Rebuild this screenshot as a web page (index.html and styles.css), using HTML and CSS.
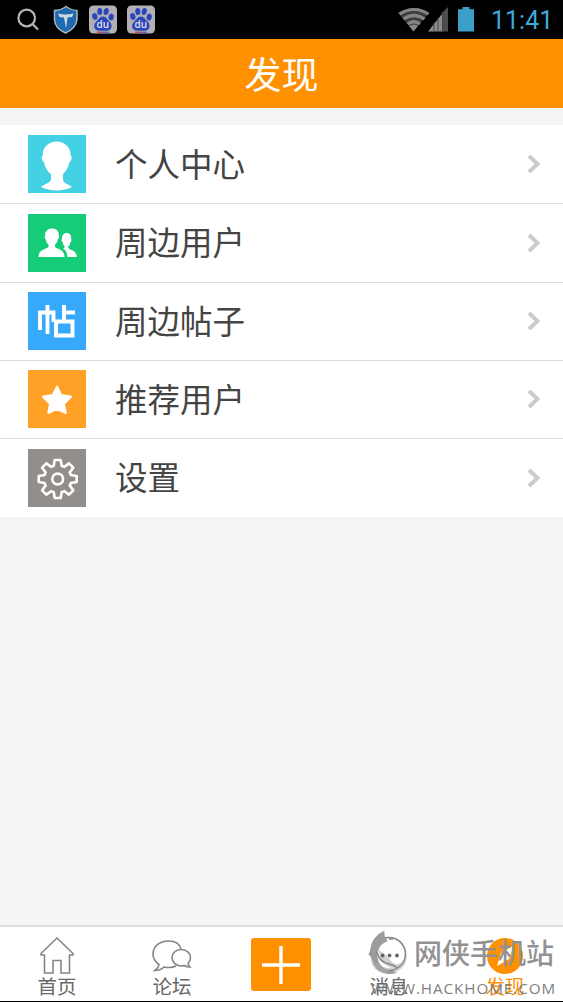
FILE: index.html
```
<!DOCTYPE html>
<html lang="zh-CN">
<head>
<meta charset="utf-8">
<title>发现</title>
<link rel="stylesheet" href="styles.css">
</head>
<body>
<div class="phone">
  <div class="status">
    <svg class="status-left" width="170" height="39" viewBox="0 0 170 39">
      <g fill="none" stroke="#b4b4b4" stroke-width="2.200"><circle cx="26.700" cy="18" r="8.300"/><path d="M32.500 24l5.500 5.500"/></g>
      <path d="M66 6.500q6 4 11 4v9q-1 9-11.500 13.500Q55 28.500 54.500 19.500v-9q6 0 11.500-4z" fill="#1f69ac" stroke="#a5b7c4" stroke-width="1.500"/>
      <path d="M58 13.500q7.500 2 15.500 0l-1.500 3.500-4.500.5-1.500 11-2-11-4.500-.5z" fill="#c9dbe5"/>
      <defs>
        <g id="paw">
          <rect width="28" height="28" rx="4.500" fill="#b0b0b6"/>
          <path d="M8 26h6v2H8z" fill="#b35568"/><path d="M14 26h6v2h-6z" fill="#6269b0"/>
          <g fill="#2b45bd"><ellipse cx="5.800" cy="11" rx="2.600" ry="3.400" transform="rotate(-15 5.800 11)"/><ellipse cx="10.800" cy="6" rx="2.500" ry="3.500"/><ellipse cx="17.200" cy="6" rx="2.500" ry="3.500" transform="rotate(12 17.200 6)"/><ellipse cx="22.200" cy="11.500" rx="2.600" ry="3.400" transform="rotate(10 22.200 11.500)"/><path d="M14 11c3 0 4 3 6.500 5s3.500 8-1.500 9c-3 .4-7 .4-10 0-5-1-4.500-6-2-8.500S11 11 14 11z"/></g>
          <text class="du" x="13.700" y="22.300" text-anchor="middle">du</text>
        </g>
      </defs>
      <use href="#paw" x="89" y="5.500"/><use href="#paw" x="127" y="5.500"/>
    </svg>
    <svg class="status-right" width="82" height="39" viewBox="396 0 82 39">
      <g fill="none" stroke="#929292" stroke-width="3.200"><path d="M399.500 14q14.500-9 29 0M403.500 19q10.500-7 21 0M407.500 24q6-4.500 12.500 0"/></g>
      <path d="M409 26q5-3 9 0l-4.500 5.500z" fill="#929292"/>
      <path d="M398 13q16-10 31 0l-15.500 18z" fill="#777" opacity=".5"/>
      <path d="M428 31.500L442 14v17.500z" fill="#8c8c8c"/><path d="M443 12l5-5v24.500h-5z" fill="#4d4d4d"/>
      <path d="M434 22v10M438 18v14M442.500 12v20" stroke="#444"/>
      <path d="M462.500 7h7v2.200h4.500v22.300h-16V9.200h4.500z" fill="#3c9fc8"/>
    </svg>
    <span class="clock">11:41</span>
  </div>
  <header class="title">发现</header>
  <main class="list">
    <div class="row">
      <svg class="tile" viewBox="0 0 58 58"><rect width="58" height="58" fill="#43d1e3"/><path d="M28.500 6.500C37 6.500 43 13 42.500 20c2 2 1 6-1 7-1.500 7-4.500 10-6.500 12v6c1 4 6 4 9 7-8 4.500-22 4.500-31 0 3-3 8-3.500 10-7v-6c-3-2-6-6-7-12-2.500-1-3-5-1-7-1-7 5-13.500 13.500-13.500z" fill="#fff"/></svg>
      <span class="label">个人中心</span><svg class="chevron" viewBox="0 0 14 22"><path d="M2 3l8.500 8L2 19"/></svg>
    </div>
    <div class="row">
      <svg class="tile" viewBox="0 0 58 58"><rect width="58" height="58" fill="#15cd78"/><path d="M24.200 14.500c4.500 0 7 3 6.500 7 1 2 0 3.500-1 4-.4 3-1.700 4-2.700 5v2c1 3 9.500 2 9.500 10.500h-26c0-8.500 9-7.500 10-10.500v-2c-1.500-1-2.300-3-2.700-5-1.200-1-1.500-3-.6-4-.5-4 2.500-7 7-7zM38.500 19c3.600 0 5 3 4.700 6 .8 1.500-.2 3-.8 3.200-.3 2-1 3-2 4v1.800c1 2.500 8.400 1.500 8.400 9h-9.500c0-4.500-1.300-6.500-4-8.500 1-.5 1.300-1 1.300-2.500-1.200-1-1.700-2-2-4-1-.5-1.400-2-.7-3 0-3.500 1.500-6 4.600-6z" fill="#fff"/></svg>
      <span class="label">周边用户</span><svg class="chevron" viewBox="0 0 14 22"><path d="M2 3l8.500 8L2 19"/></svg>
    </div>
    <div class="row">
      <svg class="tile" viewBox="0 0 58 58"><rect width="58" height="58" fill="#37a9fc"/><path d="M12 38V20.500h13.500V30M19.500 13V42M36 13V30M36 20.500h11M28 29.500H44.500V43.500H28z" fill="none" stroke="#fff" stroke-width="3.900"/></svg>
      <span class="label">周边帖子</span><svg class="chevron" viewBox="0 0 14 22"><path d="M2 3l8.500 8L2 19"/></svg>
    </div>
    <div class="row">
      <svg class="tile" viewBox="0 0 58 58"><rect width="58" height="58" fill="#ffa126"/><path d="M29 17l4 8.300 9.700 1.500-7 6.900 1.800 9L29 38.700 20.500 42.700l1.800-9-7-6.900L25 25.300z" fill="#fff" stroke="#fff" stroke-width="2.500" stroke-linejoin="round"/></svg>
      <span class="label">推荐用户</span><svg class="chevron" viewBox="0 0 14 22"><path d="M2 3l8.500 8L2 19"/></svg>
    </div>
    <div class="row">
      <svg class="tile" viewBox="0 0 58 58"><rect width="58" height="58" fill="#918e8c"/><g transform="translate(29.700 30)" fill="none" stroke="#fff" stroke-width="2.600" stroke-linejoin="round"><circle r="5.400"/><path d="M-4-13L-3-19H3L4-13Q5.500-13 6.400-12L11.300-15.600 15.600-11.300 12-6.400Q13-5.500 13-4L19-3V3L13 4Q13 5.500 12 6.400L15.600 11.300 11.300 15.600 6.400 12Q5.500 13 4 13L3 19H-3L-4 13Q-5.500 13-6.400 12L-11.300 15.600-15.600 11.300-12 6.400Q-13 5.500-13 4L-19 3V-3L-13-4Q-13-5.500-12-6.400L-15.600-11.300-11.300-15.600-6.400-12Q-5.500-13-4-13z"/></g></svg>
      <span class="label">设置</span><svg class="chevron" viewBox="0 0 14 22"><path d="M2 3l8.500 8L2 19"/></svg>
    </div>
  </main>
  <nav class="tabs">
    <div class="tab"><svg width="44" height="40" viewBox="35 934 44 40"><path d="M41 953.500L57 938l16 15.500v1.500h-3.500V973H61v-12.500h-8V973h-8.500v-18H41z"/></svg><span>首页</span></div>
    <div class="tab"><svg width="44" height="40" viewBox="150 934 44 40"><path d="M181 949.500C180 944 175 941 168.500 941c-9 0-15.500 5.500-15.500 13 0 5 2.500 8 6 10.500q-.5 3.500-4 6 6-.3 9-3.500 7 1.500 12-1M181 949.500c-5 0-9 3.500-9 8s4 8.500 9 8.500q2 0 3.500-.5 2 1.500 5.500 1.500-1.500-1.500-2-3.500c1.500-1.500 2.500-3.500 2.500-6 0-4.500-4-8-9.500-8z"/></svg><span>论坛</span></div>
    <div class="add"><svg viewBox="0 0 60 54"><path d="M30 8v38M11 27h38" stroke="#fff" stroke-width="3.400"/></svg></div>
    <div class="tab"><svg width="44" height="40" viewBox="368 934 44 40"><circle cx="390" cy="954" r="16.500"/></svg><span>消息</span></div>
    <div class="tab active"><svg width="44" height="40" viewBox="483 934 44 40"><circle class="disc" cx="505" cy="956" r="18"/><path class="needle" d="M514 945l-5 14-12 7 4-13z"/></svg><span>发现</span></div>
    <div class="watermark">
      <svg class="emblem" width="44" height="46" viewBox="366 928 44 46"><path d="M384.500 929.500q-13 6-14.500 20l-1.500 4q2 1 3 4 3 13 14 15 7 1.500 12-1-12 0-18-9-4-8 0-16c3-5 7-5 8-7q-4-4-3-10z" fill="#9b9b9d"/><path d="M371 957c0 11 9 17 20 15 10-1 16-9 16-18-3 8-10 11-14 8-3-2-4-7-14-13 0 9 5 16 13 18-8 1-14-4-21-10z" fill="#aaa" opacity=".55"/><path d="M377 951q2 10 12 12 5 1 9 4M389 938h4M389 970h5" fill="none" stroke="#888" stroke-width="1.500"/><g fill="#666"><circle cx="382.500" cy="954.500" r="1.900"/><circle cx="389.500" cy="954.500" r="1.900"/><circle cx="397" cy="954.500" r="1.900"/></g></svg>
      <span class="brand">网侠手机站</span>
      <span class="site">WWW.HACKHOME.COM</span>
    </div>
  </nav>
</div>
</body>
</html>
```
FILE: styles.css
```
* { box-sizing: border-box; }
body { margin: 0; background: #f5f5f5; font-family: "Noto Sans CJK SC", sans-serif; }
.phone { width: 563px; height: 1002px; display: flex; flex-direction: column; overflow: hidden; background: #f5f5f5; }
.status { height: 39px; flex: none; display: flex; align-items: center; background: #000; padding-right: 12px; }
.status-left { flex: none; }
.status-right { margin-left: auto; }
.clock { width: 60px; margin-left: 13px; padding-top: 2px; color: #3faad8; font: 25px/37px Roboto, sans-serif; font-weight: 400; white-space: nowrap; text-align: right; }
.du { font: 600 10px "Open Sans", sans-serif; fill: #e1e1ea; }
.title { height: 69px; flex: none; background: #ff9000; color: #fff; font-size: 37px; line-height: 68px; text-align: center; }
.list { margin-top: 17px; flex: none; height: 392px; display: grid; grid-template-rows: 79px 79px 78px 78px 78px; background: #fff; }
.row { display: flex; align-items: center; padding: 0 22px 1px 28px; border-bottom: 1px solid #dedede; }
.row:first-child { padding-bottom: 0; }
.row:last-child { border-bottom: 0; }
.tile { width: 58px; height: 58px; flex: none; }
.label { margin-left: 29px; flex: 1; color: #444; font-size: 32.500px; line-height: 60px; padding-bottom: 3px; }
.chevron { width: 14px; height: 22px; fill: none; stroke: #cfcac8; stroke-width: 4; }
.tabs { position: relative; margin-top: auto; height: 77px; flex: none; display: grid; grid-template-columns: 114px 116px 101px 116px 116px; background: #fff; border-top: 2px solid #ddd; border-bottom: 1px solid #000; }
.tab { display: flex; flex-direction: column; align-items: center; padding-top: 7px; color: #686868; font-size: 19.500px; line-height: 24px; }
.tab svg { flex: none; fill: none; stroke: #858585; stroke-width: 1.600; }
.active { color: #ff9000; }
.active .disc { fill: #ff9000; stroke: none; }
.active .needle { fill: #fff; stroke: none; }
.add { width: 60px; height: 53px; margin: 11px 0 0 21px; border-radius: 3px; background: #ff9000; }
.add svg { display: block; }
.watermark { position: absolute; left: 366px; top: 1px; width: 197px; height: 74px; color: #929292; }
.emblem { position: absolute; left: 0; top: 1px; }
.brand { position: absolute; left: 48px; top: 7px; font-size: 28px; line-height: 34px; font-weight: 500; white-space: nowrap; }
.site { position: absolute; left: 5px; top: 50px; color: #808080; font: 15.200px/20px "Open Sans", sans-serif; letter-spacing: .95px; white-space: nowrap; }
```
